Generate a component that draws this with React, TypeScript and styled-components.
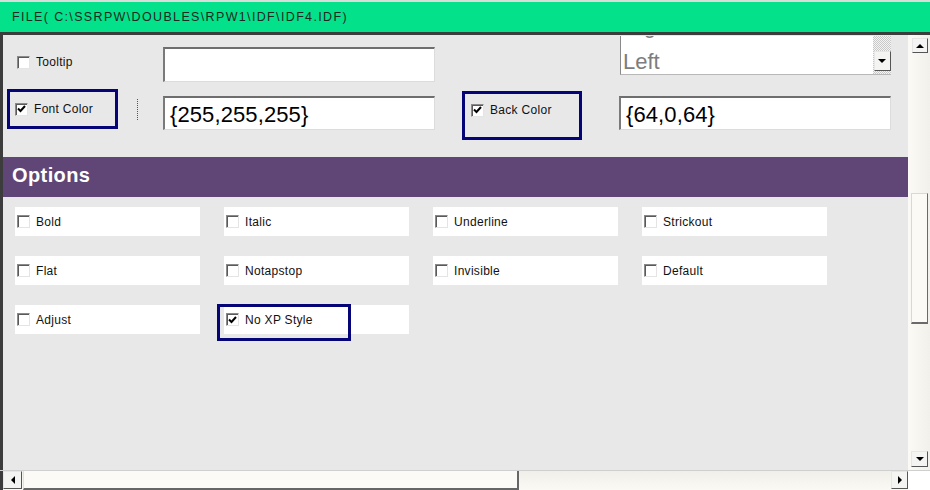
import React from "react";
import styled, { createGlobalStyle } from "styled-components";

const Global = createGlobalStyle`
  html, body { margin: 0; padding: 0; background: #e8e8e8; }
  * { box-sizing: border-box; }
`;

const Page = styled.div`
  width: 930px;
  height: 490px;
  overflow: hidden;
  background: #e8e8e8;
  display: flex;
  flex-direction: column;
  font-family: "Liberation Sans", Arial, sans-serif;
`;

const TitleBar = styled.div`
  height: 35px;
  flex: none;
  background: #04e18b;
  border-top: 2px solid #d9dcd9;
  border-bottom: 3px solid #3a3d3b;
  display: flex;
  align-items: center;
  padding-left: 12px;
`;

const TitleText = styled.span`
  font-size: 12.5px;
  color: #1c2a20;
  letter-spacing: 1.35px;
`;

const Main = styled.div`
  flex: 1;
  display: flex;
  min-height: 0;
`;

const Content = styled.div`
  flex: 1;
  border-left: 3px solid #3c3c3c;
  display: flex;
  flex-direction: column;
  min-width: 0;
`;

const TopGrid = styled.div`
  display: grid;
  padding-left: 4px;
  grid-template-columns: 111px 45px 272px 27px 120px 37px 272px;
  grid-template-rows: 54px 51px;
  align-items: start;
`;

const CheckLabel = styled.div`
  display: flex;
  align-items: center;
  gap: 6px;
  font-size: 12px;
  letter-spacing: 0.3px;
  color: #111;
`;

const TooltipCell = styled(CheckLabel)`
  grid-column: 1;
  grid-row: 1;
  align-self: center;
  padding-left: 10px;
`;

const TextField = styled.div<{ $col: number; $row: number; $top: number; $h: number }>`
  grid-column: ${(p) => p.$col};
  grid-row: ${(p) => p.$row};
  margin-top: ${(p) => p.$top}px;
  height: ${(p) => p.$h}px;
  background: #fff;
  border-top: 2px solid #6e6e6e;
  border-left: 2px solid #7a7a7a;
  border-right: 1px solid #dcdcdc;
  border-bottom: 1px solid #dcdcdc;
  display: flex;
  align-items: center;
  padding-left: 5px;
  padding-top: 2px;
  font-size: 22px;
  color: #000;
  letter-spacing: 0.1px;
`;

const ComboBox = styled.div`
  grid-column: 7;
  grid-row: 1;
  margin-left: 1px;
  margin-top: 1px;
  height: 39px;
  background: #fff;
  border-left: 1px solid #8a8a8a;
  border-bottom: 1px solid #b8b8b8;
  display: flex;
  overflow: hidden;
`;

const ComboList = styled.div`
  flex: 1;
  display: flex;
  flex-direction: column;
  justify-content: flex-end;
  overflow: hidden;
  padding-left: 2px;
`;

const ComboItem = styled.div<{ $gap?: number }>`
  font-size: 22px;
  line-height: 24px;
  color: #7d7d7d;
  flex: none;
  margin-bottom: ${(p) => p.$gap ?? 0}px;
`;

const ComboStrip = styled.div`
  width: 18px;
  flex: none;
  background: repeating-conic-gradient(#c8c8c8 0% 25%, #f4f4f4 0% 50%) 0 0 / 2px 2px;
  display: flex;
  flex-direction: column;
  justify-content: flex-end;
  align-items: center;
  padding-bottom: 3px;
`;

const ScrollButton = styled.div<{ $w: number; $h: number }>`
  width: ${(p) => p.$w}px;
  height: ${(p) => p.$h}px;
  flex: none;
  background: #f4f4f2;
  border-top: 1px solid #e6e6e6;
  border-left: 1px solid #e6e6e6;
  border-right: 1px solid #555;
  border-bottom: 1px solid #555;
  display: flex;
  align-items: center;
  justify-content: center;
`;

const Highlight = styled.div<{ $col: number; $top: number; $h: number; $padTop: number; $padLeft: number }>`
  grid-column: ${(p) => p.$col};
  grid-row: 2;
  margin-top: ${(p) => p.$top}px;
  height: ${(p) => p.$h}px;
  border: 3px solid #050578;
  display: flex;
  align-items: ${(p) => (p.$padTop ? "flex-start" : "center")};
  padding-top: ${(p) => p.$padTop}px;
  padding-left: ${(p) => p.$padLeft}px;
`;

const DottedRule = styled.div`
  grid-column: 2;
  grid-row: 2;
  margin-left: 19px;
  margin-top: 10px;
  height: 21px;
  border-left: 1px dotted #555;
`;

const SectionHeader = styled.div`
  margin-top: 17px;
  height: 40px;
  flex: none;
  background: #5f4676;
  color: #fff;
  display: flex;
  align-items: center;
  padding-left: 9px;
  padding-bottom: 3px;
  font-size: 20px;
  font-weight: bold;
  letter-spacing: 0.4px;
`;

const OptionsGrid = styled.div`
  margin-top: 10px;
  padding-left: 12px;
  display: grid;
  grid-template-columns: repeat(4, 185px);
  grid-auto-rows: 29px;
  column-gap: 24px;
  row-gap: 20px;
`;

const OptionCell = styled(CheckLabel)`
  background: #fff;
  padding-left: 2px;
  position: relative;
`;

const CellHighlight = styled.div`
  position: absolute;
  left: -7px;
  top: -1px;
  width: 134px;
  height: 37px;
  border: 3px solid #050578;
  pointer-events: none;
`;

const Box = styled.span`
  width: 13px;
  height: 13px;
  flex: none;
  background: #fff;
  border-top: 1px solid #8a8a8a;
  border-left: 1px solid #8a8a8a;
  border-right: 1px solid #e4e4e4;
  border-bottom: 1px solid #e4e4e4;
  box-shadow: inset 1px 1px 0 #5a5a5a;
  display: flex;
  align-items: center;
  justify-content: center;
`;

const VScroll = styled.div`
  width: 22px;
  flex: none;
  background: linear-gradient(90deg, #fbfaf6, #f1f0ea);
  display: flex;
  flex-direction: column;
  padding-top: 3px;
  padding-bottom: 3px;
`;

const VUp = styled(ScrollButton)`
  margin-left: 4px;
`;

const VThumb = styled.div`
  margin-top: 140px;
  margin-left: 3px;
  width: 17px;
  height: 131px;
  background: #fbfaf5;
  border-top: 1px solid #d8d8d8;
  border-left: 1px solid #d8d8d8;
  border-right: 1px solid #6a6a6a;
  border-bottom: 2px solid #6a6a6a;
`;

const VSpacer = styled.div`
  flex: 1;
`;

const VDown = styled(ScrollButton)`
  margin-left: 3px;
`;

const HScroll = styled.div`
  height: 20px;
  flex: none;
  display: flex;
  background: linear-gradient(180deg, #f0efea, #faf9f4);
  border-top: 1px solid #cfcfcf;
`;

const HLeftEdge = styled.div`
  width: 3px;
  flex: none;
  background: #3c3c3c;
`;

const HThumb = styled.div`
  width: 496px;
  flex: none;
  margin-left: 1px;
  background: #fbfaf6;
  border-left: 1px solid #e0e0e0;
  border-right: 2px solid #666;
  border-bottom: 2px solid #666;
`;

const HSpacer = styled.div`
  flex: 1;
`;

const Corner = styled.div`
  width: 22px;
  flex: none;
  background: #fff;
`;

const Check = () => (
  <svg width="9" height="8" viewBox="0 0 9 8">
    <path d="M1 3.5 L3.5 6 L8 1" fill="none" stroke="#000" strokeWidth="2" />
  </svg>
);

const CheckBox = ({ checked }: { checked?: boolean }) => <Box>{checked && <Check />}</Box>;

type Dir = "up" | "down" | "left" | "right";
const Arrow = ({ dir }: { dir: Dir }) => {
  const pts: Record<Dir, string> = {
    up: "0,5 4,1 8,5",
    down: "0,1 8,1 4,5",
    left: "5,0 5,8 1,4",
    right: "1,0 1,8 5,4",
  };
  const vertical = dir === "up" || dir === "down";
  return (
    <svg width={vertical ? 8 : 6} height={vertical ? 6 : 8} viewBox={vertical ? "0 0 8 6" : "0 0 6 8"}>
      <polygon points={pts[dir]} fill="#000" />
    </svg>
  );
};

const options: { label: string; checked?: boolean; highlight?: boolean }[] = [
  { label: "Bold" },
  { label: "Italic" },
  { label: "Underline" },
  { label: "Strickout" },
  { label: "Flat" },
  { label: "Notapstop" },
  { label: "Invisible" },
  { label: "Default" },
  { label: "Adjust" },
  { label: "No XP Style", checked: true, highlight: true },
];

export default function App() {
  return (
    <Page>
      <Global />
      <TitleBar>
        <TitleText>FILE( C:\SSRPW\DOUBLES\RPW1\IDF\IDF4.IDF)</TitleText>
      </TitleBar>
      <Main>
        <Content>
          <TopGrid>
            <TooltipCell>
              <CheckBox />
              Tooltip
            </TooltipCell>
            <TextField $col={3} $row={1} $top={12} $h={35} />
            <ComboBox>
              <ComboList>
                <ComboItem $gap={12}>Right</ComboItem>
                <ComboItem>Left</ComboItem>
              </ComboList>
              <ComboStrip>
                <ScrollButton $w={17} $h={20}>
                  <Arrow dir="down" />
                </ScrollButton>
              </ComboStrip>
            </ComboBox>

            <Highlight $col={1} $top={0} $h={40} $padTop={0} $padLeft={5}>
              <CheckLabel>
                <CheckBox checked />
                Font Color
              </CheckLabel>
            </Highlight>
            <DottedRule />
            <TextField $col={3} $row={2} $top={7} $h={34}>
              {"{255,255,255}"}
            </TextField>
            <Highlight $col={5} $top={2} $h={49} $padTop={9} $padLeft={6}>
              <CheckLabel>
                <CheckBox checked />
                Back Color
              </CheckLabel>
            </Highlight>
            <TextField $col={7} $row={2} $top={7} $h={34}>
              {"{64,0,64}"}
            </TextField>
          </TopGrid>

          <SectionHeader>Options</SectionHeader>

          <OptionsGrid>
            {options.map((o) => (
              <OptionCell key={o.label}>
                <CheckBox checked={o.checked} />
                {o.label}
                {o.highlight && <CellHighlight />}
              </OptionCell>
            ))}
          </OptionsGrid>
        </Content>
        <VScroll>
          <VUp $w={16} $h={15}>
            <Arrow dir="up" />
          </VUp>
          <VThumb />
          <VSpacer />
          <VDown $w={17} $h={16}>
            <Arrow dir="down" />
          </VDown>
        </VScroll>
      </Main>
      <HScroll>
        <HLeftEdge />
        <ScrollButton $w={19} $h={18}>
          <Arrow dir="left" />
        </ScrollButton>
        <HThumb />
        <HSpacer />
        <ScrollButton $w={17} $h={18}>
          <Arrow dir="right" />
        </ScrollButton>
        <Corner />
      </HScroll>
    </Page>
  );
}
